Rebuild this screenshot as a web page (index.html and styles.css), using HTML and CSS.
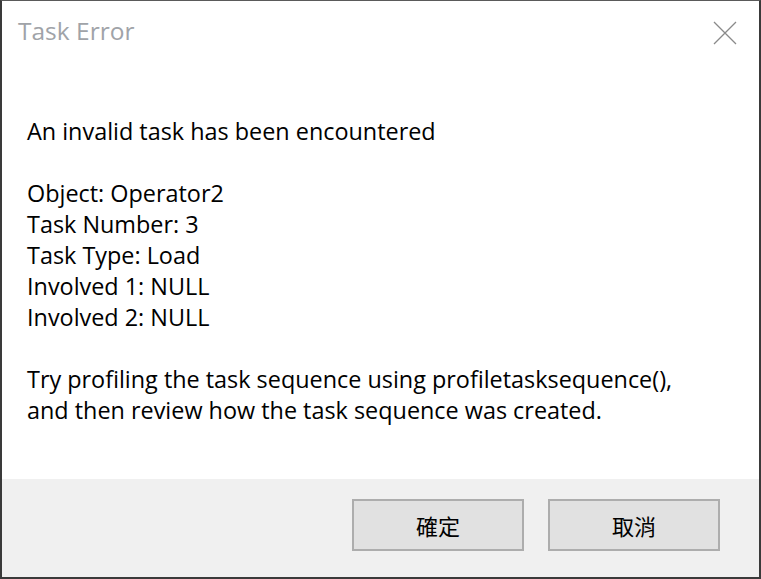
FILE: index.html
```html
<!DOCTYPE html>
<html lang="en">
<head>
<meta charset="utf-8">
<title>Task Error</title>
<link rel="stylesheet" href="styles.css">
</head>
<body>
<div class="dialog">
  <div class="titlebar">
    <span class="title">Task Error</span>
    <span class="close" aria-label="Close">
      <svg width="24" height="24" viewBox="0 0 24 24"><path d="M1 1 L23 23 M23 1 L1 23" stroke="#8a8a8a" stroke-width="1.3" fill="none"/></svg>
    </span>
  </div>
  <div class="content">
    <p>An invalid task has been encountered</p>
    <p class="blank">&nbsp;</p>
    <p>Object: Operator2</p>
    <p>Task Number: 3</p>
    <p>Task Type: Load</p>
    <p>Involved 1: NULL</p>
    <p>Involved 2: NULL</p>
    <p class="blank">&nbsp;</p>
    <p>Try profiling the task sequence using profiletasksequence(),</p>
    <p>and then review how the task sequence was created.</p>
  </div>
  <div class="footer">
    <button class="btn">確定</button>
    <button class="btn">取消</button>
  </div>
</div>
</body>
</html>
```
FILE: styles.css
```css
html, body {
  margin: 0;
  padding: 0;
  background: #ffffff;
}
.dialog {
  width: 761px;
  height: 579px;
  box-sizing: border-box;
  border-top: 1px solid #5a5a5a;
  border-left: 2px solid #3a3a3a;
  border-right: 2px solid #3a3a3a;
  border-bottom: 2px solid #3a3a3a;
  background: #ffffff;
  display: flex;
  flex-direction: column;
  font-family: "Open Sans", "Noto Sans CJK TC", sans-serif;
}
.titlebar {
  height: 62px;
  display: flex;
  align-items: flex-start;
  justify-content: space-between;
}
.title {
  margin: 12px 0 0 16px;
  font-size: 24.5px;
  line-height: 36px;
  color: #a0a3a8;
}
.close {
  margin: 20px 22px 0 0;
  width: 24px;
  height: 24px;
  display: block;
}
.close svg { display: block; }
.content {
  padding: 53px 0 0 25px;
  height: 416px;
  box-sizing: border-box;
  font-size: 23.4px;
  line-height: 31px;
  color: #000000;
}
.content p {
  margin: 0;
  white-space: nowrap;
}
.footer {
  flex: 1;
  background: #f0f0f0;
  display: flex;
  justify-content: flex-end;
  align-items: flex-start;
  gap: 24px;
  padding: 20px 39px 0 0;
}
.btn {
  width: 172px;
  height: 52px;
  box-sizing: border-box;
  border: 2px solid #adadad;
  background: #e1e1e1;
  font-family: "Noto Sans CJK TC", sans-serif;
  font-size: 22px;
  color: #000000;
  padding: 0;
}
```
